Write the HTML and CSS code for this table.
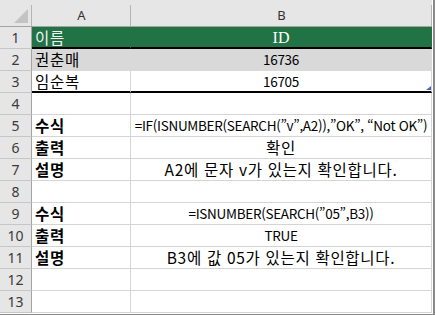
FILE: index.html
```html
<!DOCTYPE html>
<html lang="ko">
<head>
<meta charset="utf-8">
<link rel="stylesheet" href="styles.css">
</head>
<body>
<div class="sheet">
  <div class="corner"><svg width="31" height="26" viewBox="0 0 31 26"><polygon points="28,9 28,23 14,23" fill="#c3c3c3"/></svg></div>
  <div class="colhead">A</div>
  <div class="colhead">B</div>

  <div class="rowhead">1</div>
  <div class="cell green">이름</div>
  <div class="cell green center id">ID</div>

  <div class="rowhead">2</div>
  <div class="cell band">권춘매</div>
  <div class="cell band center lat">16736</div>

  <div class="rowhead">3</div>
  <div class="cell thick">임순복</div>
  <div class="cell thick center lat">16705<span class="handle"></span></div>

  <div class="rowhead">4</div>
  <div class="cell"></div>
  <div class="cell"></div>

  <div class="rowhead">5</div>
  <div class="cell label">수식</div>
  <div class="cell center lat">=IF(ISNUMBER(SEARCH(”v”,A2)),”OK”, “Not OK”)</div>

  <div class="rowhead">6</div>
  <div class="cell label">출력</div>
  <div class="cell center">확인</div>

  <div class="rowhead">7</div>
  <div class="cell label">설명</div>
  <div class="cell center">A2에 문자 v가 있는지 확인합니다.</div>

  <div class="rowhead">8</div>
  <div class="cell"></div>
  <div class="cell"></div>

  <div class="rowhead">9</div>
  <div class="cell label">수식</div>
  <div class="cell center lat">=ISNUMBER(SEARCH(”05”,B3))</div>

  <div class="rowhead">10</div>
  <div class="cell label">출력</div>
  <div class="cell center lat">TRUE</div>

  <div class="rowhead">11</div>
  <div class="cell label">설명</div>
  <div class="cell center">B3에 값 05가 있는지 확인합니다.</div>

  <div class="rowhead">12</div>
  <div class="cell"></div>
  <div class="cell"></div>

  <div class="rowhead">13</div>
  <div class="cell"></div>
  <div class="cell"></div>
</div>
</body>
</html>
```

FILE: styles.css
```css
* { box-sizing: border-box; }
html, body { margin: 0; padding: 0; }
body {
  width: 435px;
  height: 315px;
  overflow: hidden;
  background: #ffffff;
}
.sheet {
  display: grid;
  grid-template-columns: 32px 99px 301px;
  grid-template-rows: 27px repeat(13, 22px);
  width: 435px;
  height: 315px;
  padding-right: 1px;
  padding-bottom: 1px;
  border-right: 2px solid #8a8a8a;
  border-bottom: 1px solid #8a8a8a;
}
.corner {
  background: #e6e6e6 linear-gradient(#b4b4b4, #b4b4b4) no-repeat right 5px / 1px 21px;
  border-bottom: 1px solid #a3a3a3;
}
.corner svg { display: block; }
.colhead {
  background: #e6e6e6 linear-gradient(#b4b4b4, #b4b4b4) no-repeat right 5px / 1px 21px;
  border-bottom: 1px solid #a3a3a3;
  display: flex;
  align-items: center;
  justify-content: center;
  padding-top: 3px;
  font-family: "Noto Sans", sans-serif;
  font-size: 13px;
  color: #333;
}
.rowhead {
  background: #e6e6e6;
  border-right: 1px solid #a3a3a3;
  border-bottom: 1px solid #c6c6c6;
  display: flex;
  align-items: center;
  justify-content: center;
  font-family: "Noto Sans", sans-serif;
  font-size: 14px;
  line-height: 20px;
  color: #3a3a3a;
}
.cell {
  position: relative;
  border-right: 1px solid #d4d4d4;
  border-bottom: 1px solid #d4d4d4;
  display: flex;
  align-items: center;
  padding: 0 3px;
  font-family: "Noto Sans CJK KR", sans-serif;
  font-size: 15.5px;
  line-height: 19px;
  letter-spacing: 0.7px;
  color: #000;
  white-space: nowrap;
}
.lat {
  font-size: 13.5px;
  letter-spacing: -0.3px;
}
.center { justify-content: center; }
.label { font-weight: bold; }
.green {
  background: #217346;
  color: #f2f2f2;
  border-right-color: #217346;
  border-bottom: 2px solid #000;
}
.id {
  font-family: "Liberation Serif", serif;
  font-size: 16px;
  letter-spacing: 0;
  color: #ffffff;
}
.band {
  background: #d9d9d9;
  border-right-color: #d9d9d9;
  border-bottom-color: #d9d9d9;
}
.thick { border-bottom: 2px solid #000; }
.handle {
  position: absolute;
  right: 0;
  bottom: 1px;
  width: 5px;
  height: 4px;
  background: #4a64c0;
  clip-path: polygon(100% 0, 100% 100%, 0 100%);
}
```
